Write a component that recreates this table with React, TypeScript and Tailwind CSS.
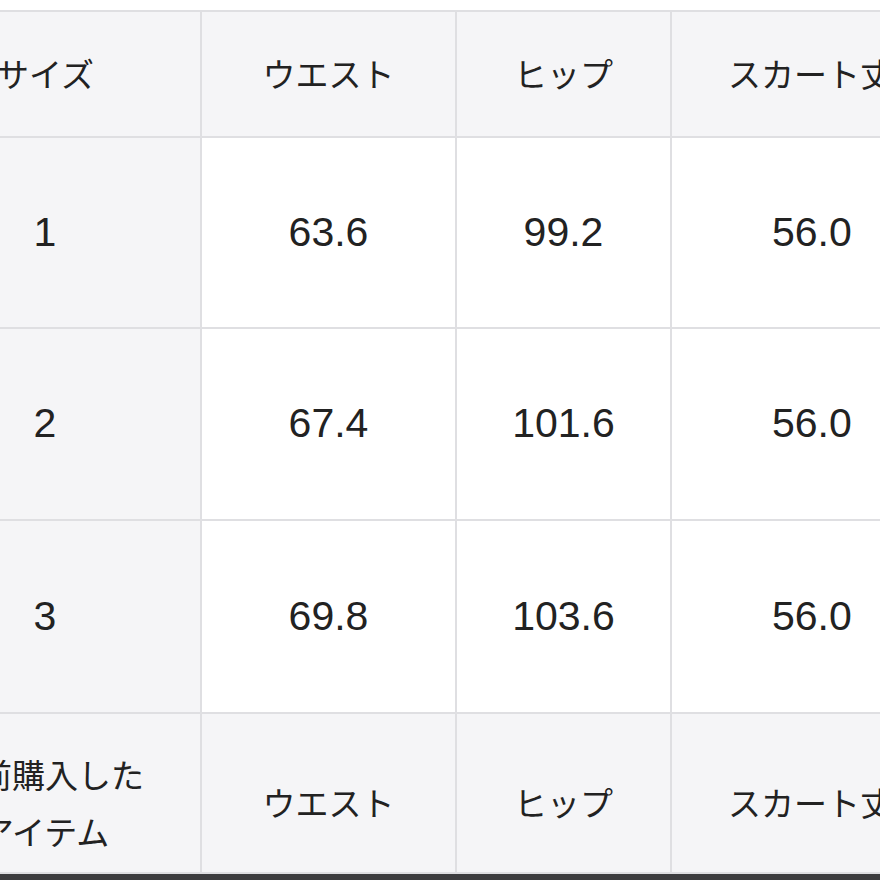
import React from 'react';

const jp = { fontFamily: '"Noto Sans CJK JP", "Noto Sans", sans-serif' };
const num = { fontFamily: '"Liberation Sans", Arial, sans-serif' };

const rows = [
  { size: '1', waist: '63.6', hip: '99.2', length: '56.0' },
  { size: '2', waist: '67.4', hip: '101.6', length: '56.0' },
  { size: '3', waist: '69.8', hip: '103.6', length: '56.0' },
];

function Head({ children, className = '' }: { children: React.ReactNode; className?: string }) {
  return (
    <div className={`bg-[#f5f5f7] flex items-center justify-center text-[33px] text-[#222] ${className}`} style={jp}>
      {children}
    </div>
  );
}

export default function App() {
  return (
    <div className="w-[880px] h-[880px] overflow-hidden bg-white flex flex-col">
      <div className="h-[10px] shrink-0" />
      <div className="-ml-[110px] w-[1000px] grid grid-cols-[310px_253px_213px_280px] grid-rows-[124px_189px_190px_191px_158px] gap-[2px] py-[2px] bg-[#dfdfe2] shrink-0">
        <Head>サイズ</Head>
        <Head>ウエスト</Head>
        <Head>ヒップ</Head>
        <Head className="justify-start pl-[56px]">スカート丈</Head>

        {rows.map((r) => (
          <React.Fragment key={r.size}>
            <div className="bg-[#f5f5f7] flex items-center justify-center text-[41px] text-[#222]" style={num}>{r.size}</div>
            <div className="bg-white flex items-center justify-center text-[41px] text-[#222]" style={num}>{r.waist}</div>
            <div className="bg-white flex items-center justify-center text-[41px] text-[#222]" style={num}>{r.hip}</div>
            <div className="bg-white flex items-center justify-start pl-[100px] text-[41px] text-[#222]" style={num}>{r.length}</div>
          </React.Fragment>
        ))}

        <Head className="pt-[20px]">
          <div className="text-center leading-[57px]">以前購入した<br />アイテム</div>
        </Head>
        <Head className="pt-[20px]">ウエスト</Head>
        <Head className="pt-[20px]">ヒップ</Head>
        <Head className="justify-start pl-[56px] pt-[20px]">スカート丈</Head>
      </div>
      <div className="flex-1 bg-[#3d3d3f]" />
    </div>
  );
}
